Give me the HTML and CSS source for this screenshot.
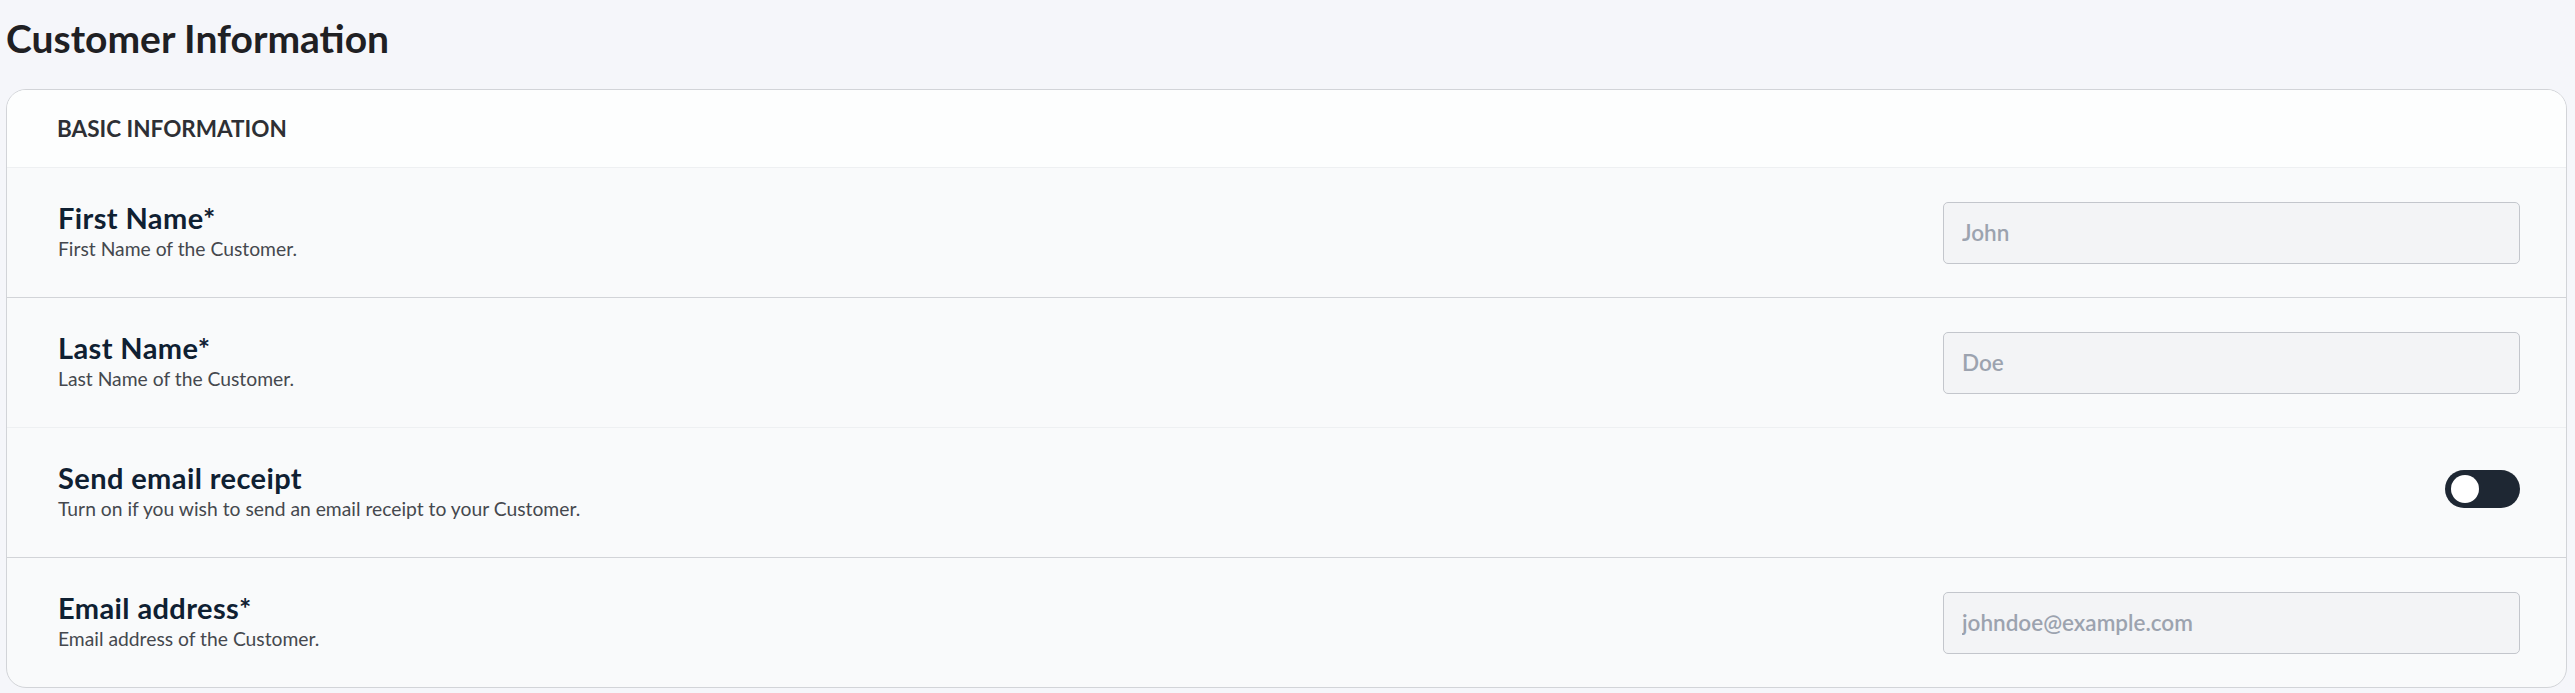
FILE: index.html
```html
<!DOCTYPE html>
<html lang="en">
<head>
  <meta charset="UTF-8" />
  <title>Customer Information</title>
  <link rel="stylesheet" href="styles.css">
</head>
<body>
  <main class="page">
    <h1 class="page-title">Customer Information</h1>

    <section class="card">
      <div class="card-header">Basic Information</div>

      <div class="field-row strong-line">
        <div class="field-text">
          <label class="field-label" for="firstName">First Name*</label>
          <div class="field-help">First Name of the Customer.</div>
        </div>
        <input type="text" id="firstName" class="field-input" placeholder="John" />
      </div>

      <div class="field-row">
        <div class="field-text">
          <label class="field-label" for="lastName">Last Name*</label>
          <div class="field-help">Last Name of the Customer.</div>
        </div>
        <input type="text" id="lastName" class="field-input" placeholder="Doe" />
      </div>

      <div class="field-row strong-line">
        <div class="field-text">
          <div class="field-label">Send email receipt</div>
          <div class="field-help">Turn on if you wish to send an email receipt to your Customer.</div>
        </div>
        <button class="toggle" type="button" aria-pressed="false"><span class="knob"></span></button>
      </div>

      <div class="field-row last">
        <div class="field-text">
          <label class="field-label" for="email">Email address*</label>
          <div class="field-help">Email address of the Customer.</div>
        </div>
        <input type="email" id="email" class="field-input" placeholder="johndoe@example.com" />
      </div>
    </section>
  </main>
</body>
</html>
```

FILE: styles.css
```css
body {
  font-family: Lato, "Noto Sans", sans-serif;
  margin: 0;
  background: #f5f6fa;
  color: #1f2023;
}

.page {
  padding: 0 8px 0 6px;
}

.page-title {
  margin: 0;
  padding-top: 15px;
  height: 89px;
  font-size: 39px;
  line-height: 1.2;
  font-weight: 700;
  color: #1f2023;
  box-sizing: border-box;
}

.card {
  background: #f9fafb;
  border: 1px solid #d2d4d8;
  border-radius: 20px;
  overflow: hidden;
}

.card-header {
  background: #fdfefe;
  padding: 25px 0 25px 50px;
  font-size: 22.5px;
  line-height: 1.2;
  font-weight: 700;
  text-transform: uppercase;
  color: #2e3035;
  border-bottom: 1px solid #eef0f2;
}

.field-row {
  display: flex;
  align-items: center;
  justify-content: space-between;
  height: 130px;
  padding: 0 46px 0 51px;
  box-sizing: border-box;
  border-bottom: 1px solid #eef0f2;
}

.field-row.strong-line {
  border-bottom-color: #d2d4d8;
}

.field-row.last {
  border-bottom: none;
  height: 129px;
}

.field-text {
  display: flex;
  flex-direction: column;
  margin-bottom: 4px;
}

.field-label {
  font-size: 29px;
  line-height: 1.2;
  font-weight: 700;
  letter-spacing: 0.4px;
  color: #0f2032;
}

.field-help {
  margin-top: 1px;
  font-size: 19.3px;
  line-height: 1.2;
  color: #45484e;
}

.field-input {
  width: 577px;
  height: 62px;
  box-sizing: border-box;
  padding: 0 18px;
  font-family: Lato, "Noto Sans", sans-serif;
  font-size: 22.5px;
  font-weight: 600;
  background: #f3f4f6;
  border: 1px solid #c3c6cc;
  border-radius: 5px;
  color: #1f2023;
}

.field-input::placeholder {
  color: #9ca3af;
}

.toggle {
  width: 75px;
  height: 38px;
  margin-bottom: 7px;
  padding: 0 0 0 6px;
  border: none;
  border-radius: 19px;
  background: #1e2733;
  display: flex;
  align-items: center;
  cursor: pointer;
}

.knob {
  width: 28px;
  height: 28px;
  border-radius: 50%;
  background: #fff;
}
```
